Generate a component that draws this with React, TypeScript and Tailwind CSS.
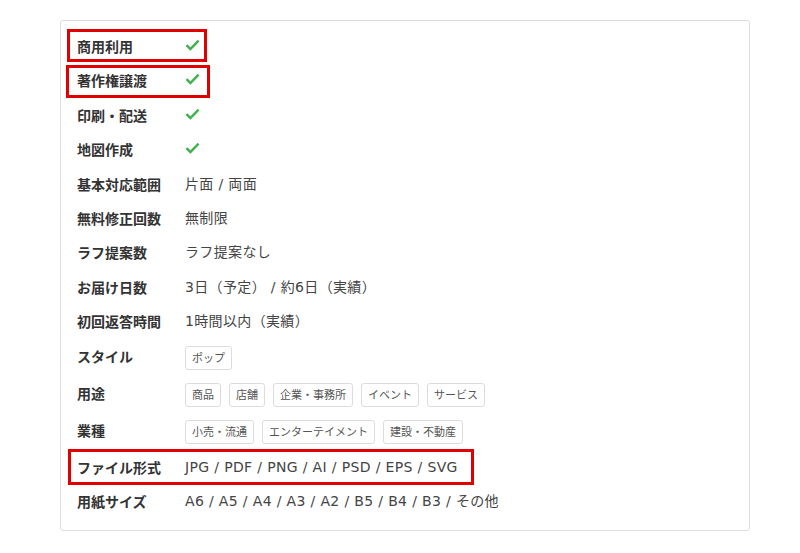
import type { ReactNode } from 'react'

type Row = {
  label: string
  value?: string
  check?: boolean
  tags?: string[]
  mark?: string
}

const rows: Row[] = [
  { label: '商用利用', check: true, mark: 'left-[-10px] top-[0px] w-[140px] h-[33px]' },
  { label: '著作権譲渡', check: true, mark: 'left-[-11px] top-[2px] w-[144px] h-[33px]' },
  { label: '印刷・配送', check: true },
  { label: '地図作成', check: true },
  { label: '基本対応範囲', value: '片面 / 両面' },
  { label: '無料修正回数', value: '無制限' },
  { label: 'ラフ提案数', value: 'ラフ提案なし' },
  { label: 'お届け日数', value: '3日（予定） / 約6日（実績）' },
  { label: '初回返答時間', value: '1時間以内（実績）' },
  { label: 'スタイル', tags: ['ポップ'] },
  { label: '用途', tags: ['商品', '店舗', '企業・事務所', 'イベント', 'サービス'] },
  { label: '業種', tags: ['小売・流通', 'エンターテイメント', '建設・不動産'] },
  {
    label: 'ファイル形式',
    value: 'JPG / PDF / PNG / AI / PSD / EPS / SVG',
    mark: 'left-[-9px] top-[-1px] w-[406px] h-[36px]',
  },
  { label: '用紙サイズ', value: 'A6 / A5 / A4 / A3 / A2 / B5 / B4 / B3 / その他' },
]

function CheckMark() {
  return (
    <svg width="15" height="12" viewBox="0 0 15 12" className="mt-[-3px]">
      <path d="M1.5 6.2 L5.4 10 L13.6 1.6" fill="none" stroke="#3bb34a" strokeWidth="2.4" strokeLinejoin="miter" />
    </svg>
  )
}

function Tag({ children }: { children: ReactNode }) {
  return (
    <span className="h-[24px] px-[6px] flex items-center rounded-[3px] border border-[#dcdcdc] text-[11px] text-[#555]">
      {children}
    </span>
  )
}

export default function App() {
  return (
    <div
      className="pt-[20px] pl-[60px] bg-white min-h-[553px]"
      style={{ fontFamily: '"Noto Sans CJK JP", "Noto Sans", sans-serif' }}
    >
      <div className="w-[690px] border border-[#dddddd] rounded-[3px] pl-[16px] pt-[8px] pb-[12px] text-[#333]">
        {rows.map((r) => (
          <div key={r.label} className="relative flex items-start py-[7px]">
            {r.mark && <div className={`absolute border-[3px] border-[#e00000] ${r.mark}`} />}
            <div className="w-[108px] shrink-0 text-[14px] leading-[20.4px] font-bold text-[#333]">{r.label}</div>
            {r.check && (
              <div className="h-[20.4px] flex items-center">
                <CheckMark />
              </div>
            )}
            {r.value && (
              <div
                className="text-[14px] leading-[20.4px] tracking-[0.35px] text-[#444]"
                style={{ fontFamily: '"DejaVu Sans", "Noto Sans CJK JP", sans-serif' }}
              >
                {r.value}
              </div>
            )}
            {r.tags && (
              <div className="flex gap-2 h-[23px]">
                {r.tags.map((t) => (
                  <Tag key={t}>{t}</Tag>
                ))}
              </div>
            )}
          </div>
        ))}
      </div>
    </div>
  )
}
